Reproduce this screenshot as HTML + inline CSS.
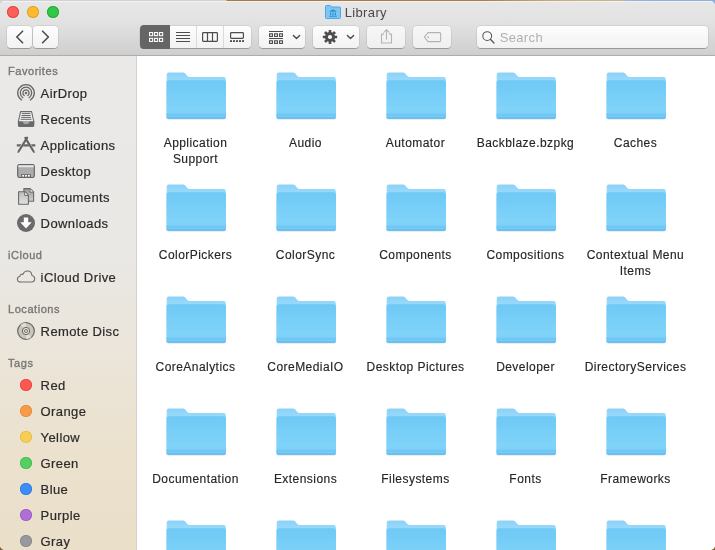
<!DOCTYPE html>
<html>
<head>
<meta charset="utf-8">
<title>Library</title>
<style>
*{box-sizing:border-box;margin:0;padding:0}
html,body{width:715px;height:550px;overflow:hidden}
body{position:relative;font-family:"Liberation Sans",sans-serif;background:#4a3a2a;color:#2a2a2a}
.abs{position:absolute}
#desk{left:0;top:0;width:715px;height:6px;background:linear-gradient(90deg,#d2d2d2 0,#d2d2d2 226px,#a67a45 227px,#a97d48 480px,#c9ad80 560px,#cdb58c 620px,#93b3dc 628px,#8fb0da 715px)}
#deskb{left:0;top:540px;width:715px;height:10px;background:linear-gradient(90deg,#7a5a34 0,#7a5a34 50%,#8a6038 100%)}
#win{will-change:transform;left:0;top:1px;width:715px;height:549px;border-radius:5px;overflow:hidden;background:#fff}
#tb{left:0;top:0;width:715px;height:54px;background:linear-gradient(#e7e7e7 0,#e2e2e2 20px,#cfcfcf 100%);border-top:1px solid #f2f2f2}
#tbl{left:0;top:54px;width:715px;height:1px;background:#adadad}
#side{left:0;top:55px;width:136px;height:494px;background:linear-gradient(#eae9e8 0,#eae8e5 200px,#ebe5d9 300px,#ebe1cd 400px,#eadfc9 100%)}
#sdiv{left:136px;top:55px;width:1px;height:494px;background:#d3d2d0}
#main{left:137px;top:55px;width:578px;height:494px;background:#fff}
.tl{width:12px;height:12px;border-radius:50%;top:5px}
.btn{top:25px;height:22px;border-radius:4px;background:linear-gradient(#fdfdfd,#f2f2f2);box-shadow:0 0 0 .5px rgba(0,0,0,.13),0 1px 0 0 rgba(0,0,0,.22)}
.title{left:344.7px;top:3.5px;font-size:13px;line-height:16px;color:#484848;letter-spacing:.36px}
.sh{left:8px;font-size:11px;color:#777;-webkit-text-stroke:.35px #777;line-height:14px;letter-spacing:.55px}
.si{left:40.6px;font-size:13px;line-height:16px;color:#2b2b2b;white-space:nowrap;letter-spacing:.4px;margin-top:1px;-webkit-text-stroke:.2px #2b2b2b}
.dot{left:20px;width:12px;height:12px;border-radius:50%}
.lbl{width:130px;text-align:center;font-size:12px;line-height:16px;letter-spacing:.45px;color:#262626;margin-top:1px;-webkit-text-stroke:.15px #262626}
svg{position:absolute;overflow:visible}
</style>
</head>
<body>
<div id="desk" class="abs"></div>
<div id="deskb" class="abs"></div>
<div id="win" class="abs">
  <div id="tb" class="abs"></div>
  <div id="tbl" class="abs"></div>
  <div id="side" class="abs"></div>
  <div id="sdiv" class="abs"></div>
  <div id="main" class="abs"></div>

  <!-- traffic lights -->
  <div class="abs tl" style="left:7px;background:#fc5f57;box-shadow:inset 0 0 0 .9px #e0463f"></div>
  <div class="abs tl" style="left:27px;background:#fdbc2f;box-shadow:inset 0 0 0 .9px #dfa023"></div>
  <div class="abs tl" style="left:47px;background:#33c748;box-shadow:inset 0 0 0 .9px #24a932"></div>

  <!-- title -->
  <svg style="left:325px;top:4px" width="16" height="14" viewBox="0 0 16 14">
    <path d="M0.5 1.5 Q0.5 0.5 1.5 0.5 H5.2 L6.6 2 H14.5 Q15.5 2 15.5 3 V12.5 Q15.5 13.5 14.5 13.5 H1.5 Q0.5 13.5 0.5 12.5Z" fill="#7cc8f3" stroke="#4ba9e2" stroke-width="1"/>
    <path d="M8 4.2 L11.6 6.2 V6.8 H4.4 V6.2Z M5 7.4 H6.2 V10.2 H5Z M7.4 7.4 H8.6 V10.2 H7.4Z M9.8 7.4 H11 V10.2 H9.8Z M4.2 10.7 H11.8 V11.8 H4.2Z" fill="#2f8fd6"/>
  </svg>
  <div class="abs title">Library</div>

  <!-- nav buttons -->
  <div class="abs btn" style="left:7px;width:25px"></div>
  <div class="abs btn" style="left:33px;width:25px"></div>
  <svg style="left:7px;top:25px" width="51" height="22" viewBox="0 0 51 22">
    <path d="M15.6 5.2 L9.8 11 L15.6 16.8" fill="none" stroke="#4d4d4d" stroke-width="1.6" stroke-linecap="round" stroke-linejoin="round"/>
    <path d="M35.6 5.2 L41.4 11 L35.6 16.8" fill="none" stroke="#4d4d4d" stroke-width="1.6" stroke-linecap="round" stroke-linejoin="round"/>
  </svg>

  <!-- view segmented -->
  <div class="abs btn" style="left:140px;width:111px"></div>
  <div class="abs" style="left:140px;top:24px;width:30px;height:23.6px;background:#656565;border-radius:4px 0 0 4px"></div>
  <div class="abs" style="left:196px;top:25px;width:1px;height:22px;background:#dadada"></div>
  <div class="abs" style="left:223px;top:25px;width:1px;height:22px;background:#dadada"></div>
  <svg style="left:140px;top:25px" width="111" height="22" viewBox="0 0 111 22">
    <g fill="none" stroke="#fff" stroke-width="1.05">
      <rect x="9.55" y="6.55" width="3.1" height="3.1"/><rect x="14.55" y="6.55" width="3.1" height="3.1"/><rect x="19.55" y="6.55" width="3.1" height="3.1"/>
      <rect x="9.55" y="12.35" width="3.1" height="3.1"/><rect x="14.55" y="12.35" width="3.1" height="3.1"/><rect x="19.55" y="12.35" width="3.1" height="3.1"/>
    </g>
    <g fill="#4d4d4d">
      <rect x="36" y="6" width="14" height="1"/><rect x="36" y="9" width="14" height="1"/><rect x="36" y="12" width="14" height="1"/><rect x="36" y="15" width="14" height="1"/>
    </g>
    <g fill="none" stroke="#4d4d4d" stroke-width="1.2">
      <rect x="62.6" y="6.6" width="14.8" height="8.8" rx="0.8"/>
      <path d="M67.5 6.6 V15.4 M72.5 6.6 V15.4"/>
      <rect x="90.6" y="6.6" width="12.8" height="5.8" rx="0.8"/>
    </g>
    <g fill="#4d4d4d">
      <rect x="90" y="14.2" width="2" height="1.8"/><rect x="93" y="14.2" width="2" height="1.8"/><rect x="96" y="14.2" width="2" height="1.8"/><rect x="99" y="14.2" width="2" height="1.8"/><rect x="102" y="14.2" width="2" height="1.8"/>
    </g>
  </svg>

  <!-- arrange -->
  <div class="abs btn" style="left:259px;width:46px"></div>
  <svg style="left:259px;top:25px" width="46" height="22" viewBox="0 0 46 22">
    <g fill="#4d4d4d"><rect x="10" y="5" width="14" height="1"/><rect x="10" y="12" width="14" height="1"/></g>
    <g fill="none" stroke="#4d4d4d" stroke-width="1.1">
      <rect x="10.55" y="7.8" width="2.9" height="2.6"/><rect x="15.55" y="7.8" width="2.9" height="2.6"/><rect x="20.55" y="7.8" width="2.9" height="2.6"/>
      <rect x="10.55" y="14.8" width="2.9" height="2.6"/><rect x="15.55" y="14.8" width="2.9" height="2.6"/><rect x="20.55" y="14.8" width="2.9" height="2.6"/>
    </g>
    <path d="M34.4 9.4 L37.5 12.6 L40.6 9.4" fill="none" stroke="#4d4d4d" stroke-width="1.4" stroke-linecap="round" stroke-linejoin="round"/>
  </svg>

  <!-- action -->
  <div class="abs btn" style="left:313px;width:46px"></div>
  <svg style="left:313px;top:25px" width="46" height="22" viewBox="0 0 46 22">
    <g transform="translate(17 11)">
      <g fill="#4d4d4d">
        <rect x="-1.3" y="-7.1" width="2.6" height="14.2" rx=".5"/>
        <rect x="-1.3" y="-7.1" width="2.6" height="14.2" rx=".5" transform="rotate(45)"/>
        <rect x="-1.3" y="-7.1" width="2.6" height="14.2" rx=".5" transform="rotate(90)"/>
        <rect x="-1.3" y="-7.1" width="2.6" height="14.2" rx=".5" transform="rotate(135)"/>
        <circle r="5.1"/>
      </g>
      <circle r="2.1" fill="#f8f8f8"/>
    </g>
    <path d="M34.4 9.4 L37.5 12.6 L40.6 9.4" fill="none" stroke="#4d4d4d" stroke-width="1.4" stroke-linecap="round" stroke-linejoin="round"/>
  </svg>

  <!-- share -->
  <div class="abs btn" style="left:367px;width:38px;background:linear-gradient(#f7f7f7,#efefef)"></div>
  <svg style="left:367px;top:25px" width="38" height="22" viewBox="0 0 38 22">
    <g fill="none" stroke="#b3b3b3" stroke-width="1.1" stroke-linejoin="round">
      <path d="M17 8.1 H14.5 V17 H24.5 V8.1 H22"/>
      <path d="M19.5 13.5 V3.8 M16.6 6.6 L19.5 3.6 L22.4 6.6"/>
    </g>
  </svg>

  <!-- tag -->
  <div class="abs btn" style="left:413px;width:38px;background:linear-gradient(#f7f7f7,#efefef)"></div>
  <svg style="left:413px;top:25px" width="38" height="22" viewBox="0 0 38 22">
    <path d="M15 6.6 H26.4 Q27.6 6.6 27.6 7.8 V14.4 Q27.6 15.6 26.4 15.6 H15 L11.4 11.1Z" fill="none" stroke="#b3b3b3" stroke-width="1.1" stroke-linejoin="round"/>
    <circle cx="15.2" cy="11.1" r=".9" fill="#b3b3b3"/>
  </svg>

  <!-- search -->
  <div class="abs btn" style="left:477px;width:231px"></div>
  <svg style="left:477px;top:25px" width="30" height="22" viewBox="0 0 30 22">
    <circle cx="10.2" cy="10.1" r="4.4" fill="none" stroke="#555" stroke-width="1.05"/>
    <path d="M13.4 13.3 L17 17" stroke="#555" stroke-width="1.25" stroke-linecap="round"/>
  </svg>
  <div class="abs" style="left:499.7px;top:29px;font-size:13px;line-height:16px;letter-spacing:.35px;color:#b0b0b0">Search</div>

  <!-- SIDEBAR -->
  <div class="abs sh" style="top:63px">Favorites</div>
  <div class="abs si" style="top:84px">AirDrop</div>
  <div class="abs si" style="top:110px">Recents</div>
  <div class="abs si" style="top:136px">Applications</div>
  <div class="abs si" style="top:162px">Desktop</div>
  <div class="abs si" style="top:188px">Documents</div>
  <div class="abs si" style="top:214px">Downloads</div>
  <div class="abs sh" style="top:247px">iCloud</div>
  <div class="abs si" style="top:268px">iCloud Drive</div>
  <div class="abs sh" style="top:301px">Locations</div>
  <div class="abs si" style="top:322px">Remote Disc</div>
  <div class="abs sh" style="top:355px">Tags</div>
  <div class="abs si" style="top:376px">Red</div>
  <div class="abs si" style="top:402px">Orange</div>
  <div class="abs si" style="top:428px">Yellow</div>
  <div class="abs si" style="top:454px">Green</div>
  <div class="abs si" style="top:480px">Blue</div>
  <div class="abs si" style="top:506px">Purple</div>
  <div class="abs si" style="top:532px">Gray</div>

  <div class="abs dot" style="top:378px;background:#fc5753;box-shadow:inset 0 0 0 .8px #e8453f"></div>
  <div class="abs dot" style="top:404px;background:#f69c47;box-shadow:inset 0 0 0 .8px #e58a34"></div>
  <div class="abs dot" style="top:430px;background:#f7cd55;box-shadow:inset 0 0 0 .8px #e6bb3e"></div>
  <div class="abs dot" style="top:456px;background:#55ce63;box-shadow:inset 0 0 0 .8px #3fbb4f"></div>
  <div class="abs dot" style="top:482px;background:#3d8cf7;box-shadow:inset 0 0 0 .8px #2c79e4"></div>
  <div class="abs dot" style="top:508px;background:#b06fd6;box-shadow:inset 0 0 0 .8px #9d5cc4"></div>
  <div class="abs dot" style="top:534px;background:#98989d;box-shadow:inset 0 0 0 .8px #86868b"></div>

  <!-- sidebar icons -->
  <svg id="sicons" style="left:0;top:0" width="136" height="549" viewBox="0 0 136 549">
   <defs>
    <linearGradient id="dg1" x1="0" y1="0" x2="0" y2="1"><stop offset="0" stop-color="#9b9b9b"/><stop offset="1" stop-color="#cfcfcf"/></linearGradient>
    <linearGradient id="dg2" x1="0" y1="0" x2="0" y2="1"><stop offset="0" stop-color="#bdbdbd"/><stop offset="1" stop-color="#e2e2e2"/></linearGradient>
   </defs>
   <g transform="translate(0 -1)">
    <!-- AirDrop -->
    <g fill="none" stroke="#666" stroke-width="1.3" stroke-linecap="round">
      <path d="M21.6 100 A8.3 8.3 0 1 1 30.4 100"/>
      <path d="M22.9 97.7 A5.7 5.7 0 1 1 29.1 97.7"/>
      <path d="M24.2 95.5 A3.1 3.1 0 1 1 27.8 95.5"/>
    </g>
    <circle cx="26" cy="92.9" r="1.25" fill="#6a6a6a"/>
    <!-- Recents -->
    <path d="M20.6 111.6 H31.6 L33.9 122 H18.3Z" fill="#efefef" stroke="#6a6a6a" stroke-width="1.1" stroke-linejoin="round"/>
    <path d="M21.9 113.6 H30.3 M21.5 115.5 H30.7 M21.1 117.4 H31.1 M20.7 119.3 H31.5" stroke="#6a6a6a" stroke-width="1" fill="none"/>
    <path d="M17.9 121.4 H22.6 Q23 123.6 26.1 123.6 Q29.2 123.6 29.6 121.4 H34.3 V125.6 Q34.3 126.9 33 126.9 H19.2 Q17.9 126.9 17.9 125.6Z" fill="#6a6a6a"/>
    <!-- Applications -->
    <g stroke="#6a6a6a" fill="none" stroke-linecap="round">
      <path d="M27.1 137.7 L18.7 151.3" stroke-width="2.1" stroke="#626262"/>
      <path d="M25.3 137.9 L33.5 151.3" stroke-width="2.1" stroke="#626262"/>
      <path d="M18 152.6 L18.5 151.2 M34.2 152.6 L33.7 151.2" stroke-width="1"/>
    </g>
    <path d="M16.8 144.2 H21.2 L20 146.6 H16.8Z M24.2 144.2 H28 L29.4 146.6 H22.8Z M31 144.2 H35.3 V146.6 H32.3Z" fill="#666"/>
    <!-- Desktop -->
    <rect x="17.7" y="164.7" width="16.6" height="12.8" rx="1.8" fill="#adadad" stroke="#646464" stroke-width="1.2"/>
    <path d="M18.3 166.3 Q18.3 165.3 19.3 165.3 H32.7 Q33.7 165.3 33.7 166.3 V167.2 H18.3Z" fill="#e6e6e6"/>
    <path d="M21 174.2 H31 V177.4 H21Z" fill="#6a6a6a"/>
    <rect x="22.2" y="175" width="1.8" height="1.6" fill="#fff"/><rect x="25.1" y="175" width="1.8" height="1.6" fill="#fff"/><rect x="28" y="175" width="1.8" height="1.6" fill="#fff"/>
    <!-- Documents -->
    <path d="M23.9 188.6 H30.2 L33.6 192 V201.2 H23.9Z" fill="url(#dg1)" stroke="#6a6a6a" stroke-width="1.1" stroke-linejoin="round"/>
    <path d="M30 188.8 V192.2 H33.4" fill="#f4f4f4" stroke="#6a6a6a" stroke-width="1" stroke-linejoin="round"/>
    <path d="M18.6 191.7 H24.9 L28.4 195.2 V204.2 H18.6Z" fill="url(#dg2)" stroke="#6a6a6a" stroke-width="1.1" stroke-linejoin="round"/>
    <path d="M24.7 191.9 V195.4 H28.2" fill="#fafafa" stroke="#6a6a6a" stroke-width="1" stroke-linejoin="round"/>
    <!-- Downloads -->
    <circle cx="26" cy="223" r="9" fill="#6a6a6a"/>
    <path d="M23.8 217.4 H28.2 V222.2 H31.7 L26 228.6 L20.3 222.2 H23.8Z" fill="#fff"/>
    <!-- iCloud -->
    <path d="M20.9 282 H31.2 Q34.7 282 34.7 278.7 Q34.7 275.9 31.9 275.5 Q31.6 271 27.4 271 Q24.2 271 23.1 274.2 Q20.3 273.6 19.9 276.3 Q17.4 276.8 17.4 279.2 Q17.4 282 20.9 282Z" fill="none" stroke="#6e6e6e" stroke-width="1.1" stroke-linejoin="round"/>
    <!-- Remote Disc -->
    <circle cx="26" cy="331" r="8.3" fill="#c9c6bd" stroke="#66635e" stroke-width="1.2"/>
    <path d="M26 331 L20.5 324.8 A8.3 8.3 0 0 1 26 322.7Z M26 331 L31.5 337.2 A8.3 8.3 0 0 1 26 339.3Z" fill="#e6e3dc" opacity=".8"/>
    <circle cx="26" cy="331" r="3.7" fill="#dbd8d0" stroke="#6e6b66" stroke-width="1"/>
    <circle cx="26" cy="331" r="1.5" fill="#e8e5dc" stroke="#6e6b66" stroke-width=".9"/>
   </g>
  </svg>

  <!-- FOLDERS -->
  <svg id="folders" style="left:0;top:0" width="715" height="549" viewBox="0 0 715 549">
    <defs>
      <linearGradient id="fg" x1="0" y1="0" x2="0" y2="1">
        <stop offset="0" stop-color="#6ec9f5"/><stop offset=".75" stop-color="#80d3f9"/><stop offset="1" stop-color="#7acef7"/>
      </linearGradient>
      <linearGradient id="bg" x1="0" y1="0" x2="0" y2="1">
        <stop offset="0" stop-color="#8bd2f8"/><stop offset="1" stop-color="#9cdcfb"/>
      </linearGradient>
      <g id="f">
        <path d="M1.8 47.6 Q0.3 47.6 0.3 46 V12 H59.3 V46 Q59.3 47.6 57.8 47.6Z" fill="rgba(0,0,0,.045)"/>
        <path d="M1.8 47.1 Q0.1 47.1 0.1 45.4 V12 H59.5 V45.4 Q59.5 47.1 57.8 47.1Z" fill="rgba(0,0,0,.05)"/>
        <path d="M0.3 10.5 V2.6 Q0.3 0.2 2.7 0.2 H16.4 Q17.8 0.2 18.8 1.2 L21 3.6 Q22 4.6 23.4 4.6 H57 Q59.4 4.6 59.4 7 V10.5Z" fill="url(#bg)"/>
        <path d="M0 10.2 Q0 8 2.2 8 H57.4 Q59.6 8 59.6 10.2 V44.8 Q59.6 46.6 57.8 46.6 H1.8 Q0 46.6 0 44.8Z" fill="url(#fg)"/>
        <rect x="0" y="41.5" width="59.6" height=".9" fill="#6bc3f2"/>
        <rect x="0" y="43.1" width="59.6" height=".9" fill="#6ac2f2"/>
        <path d="M0 44.7 H59.6 V44.8 Q59.6 46.6 57.8 46.6 H1.8 Q0 46.6 0 44.8Z" fill="#69c1f1"/>
      </g>
    </defs>
    <use href="#f" x="166.4" y="71.3"/>
    <use href="#f" x="276.4" y="71.3"/>
    <use href="#f" x="386.4" y="71.3"/>
    <use href="#f" x="496.4" y="71.3"/>
    <use href="#f" x="606.4" y="71.3"/>
    <use href="#f" x="166.4" y="183.3"/>
    <use href="#f" x="276.4" y="183.3"/>
    <use href="#f" x="386.4" y="183.3"/>
    <use href="#f" x="496.4" y="183.3"/>
    <use href="#f" x="606.4" y="183.3"/>
    <use href="#f" x="166.4" y="295.3"/>
    <use href="#f" x="276.4" y="295.3"/>
    <use href="#f" x="386.4" y="295.3"/>
    <use href="#f" x="496.4" y="295.3"/>
    <use href="#f" x="606.4" y="295.3"/>
    <use href="#f" x="166.4" y="407.3"/>
    <use href="#f" x="276.4" y="407.3"/>
    <use href="#f" x="386.4" y="407.3"/>
    <use href="#f" x="496.4" y="407.3"/>
    <use href="#f" x="606.4" y="407.3"/>
    <use href="#f" x="166.4" y="519.3"/>
    <use href="#f" x="276.4" y="519.3"/>
    <use href="#f" x="386.4" y="519.3"/>
    <use href="#f" x="496.4" y="519.3"/>
    <use href="#f" x="606.4" y="519.3"/>
  </svg>
  <div class="abs lbl" style="left:130.5px;top:133px">Application<br>Support</div>
  <div class="abs lbl" style="left:240.5px;top:133px">Audio</div>
  <div class="abs lbl" style="left:350.5px;top:133px">Automator</div>
  <div class="abs lbl" style="left:460.5px;top:133px">Backblaze.bzpkg</div>
  <div class="abs lbl" style="left:570.5px;top:133px">Caches</div>
  <div class="abs lbl" style="left:130.5px;top:245px">ColorPickers</div>
  <div class="abs lbl" style="left:240.5px;top:245px">ColorSync</div>
  <div class="abs lbl" style="left:350.5px;top:245px">Components</div>
  <div class="abs lbl" style="left:460.5px;top:245px">Compositions</div>
  <div class="abs lbl" style="left:570.5px;top:245px">Contextual Menu<br>Items</div>
  <div class="abs lbl" style="left:130.5px;top:357px">CoreAnalytics</div>
  <div class="abs lbl" style="left:240.5px;top:357px">CoreMediaIO</div>
  <div class="abs lbl" style="left:350.5px;top:357px">Desktop Pictures</div>
  <div class="abs lbl" style="left:460.5px;top:357px">Developer</div>
  <div class="abs lbl" style="left:570.5px;top:357px">DirectoryServices</div>
  <div class="abs lbl" style="left:130.5px;top:469px">Documentation</div>
  <div class="abs lbl" style="left:240.5px;top:469px">Extensions</div>
  <div class="abs lbl" style="left:350.5px;top:469px">Filesystems</div>
  <div class="abs lbl" style="left:460.5px;top:469px">Fonts</div>
  <div class="abs lbl" style="left:570.5px;top:469px">Frameworks</div>
</div>
</body>
</html>
